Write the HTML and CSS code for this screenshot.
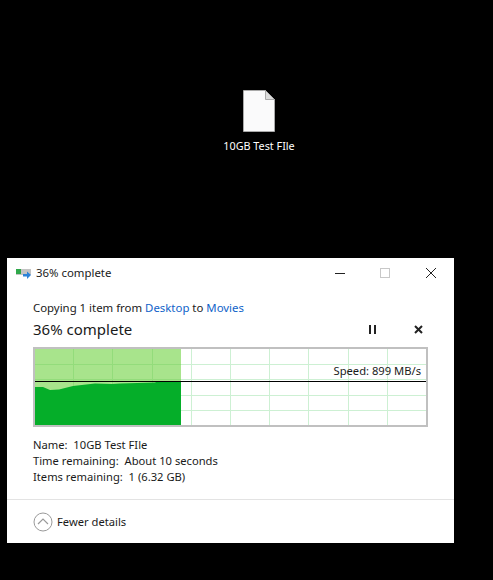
FILE: index.html
```html
<!DOCTYPE html>
<html lang="en">
<head>
    <meta charset="UTF-8">
    <meta name="viewport" content="width=device-width, initial-scale=1.0">
    <title>36% complete</title>
    <link rel="stylesheet" href="styles.css">
</head>
<body>

    <div class="desktop-icon">
        <svg class="file-icon" width="34" height="44" viewBox="0 0 34 44">
            <path d="M1.5 1.5H23.5L32.5 10.5V42.5H1.5Z" fill="#fafafb" stroke="#a9a9a9"/>
            <path d="M23.5 1.5V10.5H32.5Z" fill="#dcdcdc" stroke="#a9a9a9"/>
        </svg>
        <span class="file-label">10GB Test FIle</span>
    </div>

    <div class="window">
        <div class="titlebar">
            <svg class="title-icon" width="16" height="10" viewBox="0 0 16 10">
                <rect x="0" y="0" width="15" height="6" fill="#c4c4c4"/>
                <rect x="0" y="0" width="5" height="5" fill="#2fa84a"/>
                <path d="M7 5H11V2.500L15 6L11 10V7.500H7Z" fill="#2d83d8"/>
            </svg>
            <span class="title-text">36% complete</span>
            <div class="window-buttons">
                <svg width="12" height="12" viewBox="0 0 12 12"><path d="M0 6.500H10" stroke="#222"/></svg>
                <svg width="12" height="12" viewBox="0 0 12 12"><rect x="0.500" y="1.500" width="9" height="9" fill="none" stroke="#c8c8c8"/></svg>
                <svg width="12" height="12" viewBox="0 0 12 12"><path d="M1 1L11 11M11 1L1 11" stroke="#222"/></svg>
            </div>
        </div>

        <div class="content">
            <p class="copy-line">Copying 1 item from <a>Desktop</a> to <a>Movies</a></p>
            <div class="progress-head">
                <h1>36% complete</h1>
                <div class="progress-buttons">
                    <svg width="9" height="9" viewBox="0 0 9 9"><path d="M2 0H4V9H2ZM7 0H9V9H7Z" fill="#222"/></svg>
                    <svg width="9" height="9" viewBox="0 0 9 9"><path d="M1 1L8 8M8 1L1 8" stroke="#222" stroke-width="2"/></svg>
                </div>
            </div>

            <div class="chart">
                <svg width="391" height="76" viewBox="0 0 391 76">
                    <g stroke="#cdf0d3">
                        <path d="M156.500 0V76M195.500 0V76M234.500 0V76M273.500 0V76M313.500 0V76M352.500 0V76"/>
                        <path d="M0 15.500H391M0 30.500H391M0 46.500H391M0 61.500H391"/>
                    </g>
                    <rect width="146" height="76" fill="#a8e48c"/>
                    <g stroke="#93dc7b">
                        <path d="M38.500 0V38M77.500 0V38M117.500 0V38M0 15.500H146M0 30.500H146"/>
                    </g>
                    <path d="M0 38H8L15 41L24 40.500L30 39L38 37L60 34.500L77 35L85 34.500L120 33.500L123 32H146V76H0Z" fill="#05ae29"/>
                    <path d="M0 32.500H391" stroke="#000"/>
                </svg>
                <span class="speed">Speed: 899 MB/s</span>
            </div>

            <div class="details">
                <div>Name:&nbsp; 10GB Test FIle</div>
                <div>Time remaining:&nbsp; About 10 seconds</div>
                <div>Items remaining:&nbsp; 1 (6.32 GB)</div>
            </div>
        </div>

        <div class="footer">
            <svg width="20" height="20" viewBox="0 0 20 20">
                <circle cx="10" cy="10" r="9" fill="none" stroke="#9a9a9a"/>
                <path d="M5 12L10 7L15 12" fill="none" stroke="#9a9a9a" stroke-width="1.200"/>
            </svg>
            <span class="footer-text">Fewer details</span>
        </div>
    </div>

</body>
</html>
```

FILE: styles.css
```css
body {
    margin: 0;
    height: 580px;
    overflow: hidden;
    background-color: #000;
    font-family: 'Noto Sans', sans-serif;
    font-size: 11.2px;
    color: #1a1a1a;
}

.desktop-icon {
    display: flex;
    flex-direction: column;
    align-items: center;
    width: 100px;
    padding-top: 89px;
    margin-left: 209px;
    height: 258px;
    box-sizing: border-box;
}

.file-label {
    margin-top: 5px;
    font-size: 10.8px;
    color: #fff;
    line-height: 16px;
    white-space: nowrap;
}

.window {
    width: 447px;
    height: 285px;
    margin-left: 7px;
    background-color: #fff;
}

.titlebar {
    display: flex;
    align-items: center;
    height: 30px;
    padding-left: 9px;
}

.title-icon {
    margin-top: 2px;
}

.title-text {
    margin-left: 4px;
    margin-bottom: 2px;
    font-size: 11.4px;
}

.window-buttons {
    display: flex;
    gap: 33px;
    margin-left: auto;
    padding-right: 17px;
}

.content {
    padding: 12px 26px 0;
}

.copy-line {
    margin: 0;
    font-size: 11.4px;
    line-height: 16px;
}

.copy-line a {
    color: #0f63c9;
}

.progress-head {
    display: flex;
    align-items: center;
    justify-content: space-between;
    height: 27px;
}

.progress-head h1 {
    margin: 0 0 1px;
    font-size: 15px;
    font-weight: normal;
}

.progress-buttons {
    display: flex;
    gap: 38px;
    padding-right: 5px;
}

.chart {
    position: relative;
    width: 391px;
    height: 76px;
    margin-top: 4px;
    border: 2px solid #c0c0c0;
}

.chart svg {
    display: block;
}

.speed {
    position: absolute;
    right: 5px;
    top: 14px;
    line-height: 16px;
}

.details {
    margin-top: 10px;
    line-height: 16px;
}

.footer {
    display: flex;
    align-items: center;
    gap: 4px;
    height: 44px;
    margin-top: 14px;
    padding-left: 26px;
    border-top: 1px solid #e3e3e3;
}

.footer-text {
    margin-bottom: 2px;
}
```
